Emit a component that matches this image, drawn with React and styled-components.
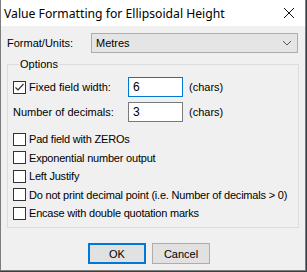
import React from "react";
import styled, { createGlobalStyle } from "styled-components";

const Global = createGlobalStyle`
  body {
    margin: 0;
    background: #3a3d44;
    font-family: "Liberation Sans", Arial, sans-serif;
    font-size: 11px;
    color: #000;
  }
`;

const Window = styled.div`
  width: 306px;
  height: 271px;
  box-sizing: border-box;
  border: 1px solid #7c7c7c;
  border-top: none;
  background: #f0f0f0;
  display: flex;
  flex-direction: column;
`;

const TitleBar = styled.div`
  height: 26px;
  background: #fff;
  display: flex;
  align-items: center;
  justify-content: space-between;
  padding: 0 10px 0 3px;
  font-family: "Noto Sans", sans-serif;
  font-size: 12.2px;
`;

const Body = styled.div`
  padding: 7px 6px 0 6px;
  display: flex;
  flex-direction: column;
`;

const Row = styled.div`
  display: flex;
  align-items: center;
  height: ${(p) => p.h || 20}px;
  margin-top: ${(p) => p.mt || 0}px;
  white-space: nowrap;
`;

const Label = styled.span`
  width: ${(p) => p.w}px;
  flex-shrink: 0;
`;

const OptionText = styled.span`
  letter-spacing: -0.2px;
`;

const Combo = styled.div`
  width: 207px;
  height: 20px;
  box-sizing: border-box;
  border: 1px solid #adadad;
  background: #e5e5e5;
  display: flex;
  align-items: center;
  justify-content: space-between;
  padding: 0 5px 0 4px;
`;

const Group = styled.fieldset`
  margin: 6px 0 0 0;
  padding: 0 5px 0 5px;
  height: 169px;
  box-sizing: border-box;
  border: 1px solid #dcdcdc;
  min-width: 0;
`;

const Legend = styled.legend`
  padding: 0 1px;
  margin-left: 6px;
  line-height: 10px;
`;

const Box = styled.span`
  width: 13px;
  height: 13px;
  box-sizing: border-box;
  border: 1px solid #333;
  background: #fff;
  display: inline-flex;
  align-items: center;
  justify-content: center;
  margin-right: 3px;
  flex-shrink: 0;
`;

const Edit = styled.div`
  width: 55px;
  height: 20px;
  box-sizing: border-box;
  border: 1px solid ${(p) => (p.focus ? "#0078d7" : "#7a7a7a")};
  background: #fff;
  padding-left: 4px;
  display: flex;
  align-items: center;
  margin-right: 6px;
  font-size: 12px;
`;

const Buttons = styled.div`
  display: flex;
  gap: 6px;
  padding-left: 81px;
  margin-top: 15px;
`;

const Button = styled.div`
  width: 58px;
  height: 21px;
  box-sizing: border-box;
  border: ${(p) => (p.primary ? "2px solid #0078d7" : "1px solid #adadad")};
  background: #e1e1e1;
  display: flex;
  align-items: center;
  justify-content: center;
`;

const Check = ({ checked }) => (
  <Box>
    {checked && (
      <svg width="11" height="11" viewBox="0 0 11 11">
        <path d="M1.5 5.5 L4 8 L9.5 2" fill="none" stroke="#333" strokeWidth="1.2" />
      </svg>
    )}
  </Box>
);

const options = [
  "Pad field with ZEROs",
  "Exponential number output",
  "Left Justify",
  "Do not print decimal point (i.e. Number of decimals > 0)",
  "Encase with double quotation marks",
];

export default function App() {
  return (
    <>
      <Global />
      <Window>
        <TitleBar>
          <span>Value Formatting for Ellipsoidal Height</span>
          <svg width="12" height="12" viewBox="0 0 12 12">
            <path d="M1 1 L11 11 M11 1 L1 11" stroke="#111" strokeWidth="1" />
          </svg>
        </TitleBar>
        <Body>
          <Row>
            <Label w={84}>Format/Units:</Label>
            <Combo>
              <span>Metres</span>
              <svg width="10" height="6" viewBox="0 0 10 6">
                <path d="M1 1 L5 5 L9 1" fill="none" stroke="#555" strokeWidth="1" />
              </svg>
            </Combo>
          </Row>
          <Group>
            <Legend>Options</Legend>
            <Row mt={8}>
              <Check checked />
              <Label w={99}>Fixed field width:</Label>
              <Edit focus>6</Edit>
              <span>(chars)</span>
            </Row>
            <Row mt={5}>
              <Label w={115}>Number of decimals:</Label>
              <Edit>3</Edit>
              <span>(chars)</span>
            </Row>
            <Row h={18.5} mt={8}>
              <Check />
              <OptionText>{options[0]}</OptionText>
            </Row>
            {options.slice(1).map((o) => (
              <Row h={18.5} key={o}>
                <Check />
                <OptionText>{o}</OptionText>
              </Row>
            ))}
          </Group>
          <Buttons>
            <Button primary>OK</Button>
            <Button>Cancel</Button>
          </Buttons>
        </Body>
      </Window>
    </>
  );
}
